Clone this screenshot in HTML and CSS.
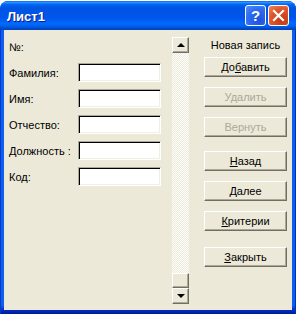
FILE: index.html
```html
<!DOCTYPE html>
<html lang="ru">
<head>
<meta name="viewport" content="width=device-width, initial-scale=1">
<link rel="stylesheet" href="styles.css">
</head>
<body>
	<div id="window">
		<div id="titlebar">
			<span id="title">Лист1</span>
			<div id="controls">
				<button class="tbBtn help">?</button>
				<button class="tbBtn close">
					<svg width="13" height="13" viewBox="0 0 13 13"><path d="M2 2 L11 11 M11 2 L2 11" stroke="#fff" stroke-width="2.2" stroke-linecap="square"/></svg>
				</button>
			</div>
		</div>
		<div id="frame">
			<div id="client">
				<div id="fields">
					<div class="row"><label>№:</label></div>
					<div class="row"><label>Фамилия:</label><input type="text"></div>
					<div class="row"><label>Имя:</label><input type="text"></div>
					<div class="row"><label>Отчество:</label><input type="text"></div>
					<div class="row"><label>Должность :</label><input type="text"></div>
					<div class="row"><label>Код:</label><input type="text"></div>
				</div>

				<div id="scrollbar">
					<div class="sbBtn"><span class="arrowUp"></span></div>
					<div class="track"></div>
					<div class="sbBtn thumb"></div>
					<div class="sbBtn"><span class="arrowDown"></span></div>
				</div>

				<div id="actions">
					<div class="caption">Новая запись</div>
					<button class="btn">До<u>б</u>авить</button>
					<button class="btn" disabled>Удалить</button>
					<button class="btn" disabled>Вернуть</button>
					<button class="btn nav"><u>Н</u>азад</button>
					<button class="btn"><u>Д</u>алее</button>
					<button class="btn"><u>К</u>ритерии</button>
					<button class="btn closeBtn"><u>З</u>акрыть</button>
				</div>
			</div>
		</div>
	</div>
</body>
</html>
```

FILE: styles.css
```css
:root {
	--face:#ECE9D8;
	--shadow:#716F64;
	--light-shadow:#ACA899;
	--xp-blue:#0054E3;
}

* {
	box-sizing:border-box;
	font-family:"Liberation Sans", Arial, sans-serif;
}

html, body {
	margin:0;
	background-color:#fff;
}

#window{
	width:296px;
	height:313px;
	margin-top:1px;
	display:flex;
	flex-direction:column;
	border-radius:8px 8px 0 0;
	overflow:hidden;
	background-color:var(--xp-blue);
}

#titlebar{
	height:29px;
	display:flex;
	align-items:center;
	padding:0 7px 0 7px;
	background:linear-gradient(to bottom, #0058ee 0%, #3593ff 4%, #288eff 6%, #127dff 8%, #036ffc 10%, #0262ee 14%, #0057e5 20%, #0054e3 24%, #0055eb 56%, #005bf5 66%, #026afe 76%, #0062ef 86%, #0052d6 92%, #0046c5 96%, #0042bd 100%);
}

#title{
	color:white;
	font-size:13px;
	font-weight:bold;
	text-shadow:1px 1px #0a1e8a;
	margin-top:1px;
}

#controls{
	margin-left:auto;
	display:flex;
	gap:2px;
}

.tbBtn{
	width:21px;
	height:21px;
	padding:0;
	border:1px solid #fff;
	border-radius:3px;
	display:flex;
	align-items:center;
	justify-content:center;
	color:white;
	font-size:15px;
	font-weight:bold;
}

.tbBtn.help{
	background:radial-gradient(circle at 70% 75%, #1f52dc 0%, #2f6ef4 60%, #5a8ef8 100%);
}

.tbBtn.close{
	background:radial-gradient(circle at 70% 75%, #c13a15 0%, #e2562b 60%, #ef8a64 100%);
}

#frame{
	flex:1;
	display:flex;
	padding:0 4px 4px 4px;
	background:linear-gradient(to bottom, #0a5ef0 0%, #0a5ef0 97%, #0027b8 99%, #001a90 100%);
	box-shadow:inset 1px 0 #0838c8, inset -1px 0 #0030b8;
}

#client{
	flex:1;
	display:flex;
	padding-top:7px;
	background-color:var(--face);
}

/* left side : labels + inputs */
#fields{
	width:168px;
	padding-left:5px;
}

.row{
	height:19px;
	margin-bottom:7px;
	display:flex;
	align-items:center;
}

.row label{
	width:69px;
	font-size:11px;
	color:#000;
	white-space:nowrap;
}

.row input{
	width:83px;
	height:19px;
	margin:0;
	padding:0 2px;
	background-color:#fff;
	border:1px solid;
	border-color:var(--light-shadow) #fff #fff var(--light-shadow);
	box-shadow:inset 1px 1px #000, inset -1px -1px #f1efe2;
	outline:none;
}

/* scrollbar */
#scrollbar{
	width:17px;
	height:267px;
	display:flex;
	flex-direction:column;
}

.sbBtn{
	height:16px;
	display:flex;
	align-items:center;
	justify-content:center;
	background-color:var(--face);
	border:1px solid;
	border-color:#fff var(--shadow) var(--shadow) #fff;
	box-shadow:inset -1px -1px var(--light-shadow);
}

.sbBtn.thumb{
	height:15px;
}

.track{
	flex:1;
	background:repeating-conic-gradient(#fff 0 25%, var(--face) 0 50%) 0 0 / 2px 2px;
}

.arrowUp, .arrowDown{
	width:0;
	height:0;
	border-left:4px solid transparent;
	border-right:4px solid transparent;
}
.arrowUp{
	border-bottom:4px solid #000;
	margin-top:-1px;
}
.arrowDown{
	border-top:4px solid #000;
}

/* right side : buttons */
#actions{
	width:83px;
	margin-left:15px;
	display:flex;
	flex-direction:column;
}

.caption{
	height:16px;
	line-height:16px;
	margin-bottom:4px;
	font-size:11px;
	text-align:center;
	white-space:nowrap;
}

.btn{
	height:20px;
	margin:0 0 10px 0;
	padding:0;
	font-size:11px;
	color:#000;
	background-color:var(--face);
	border:1px solid;
	border-color:#fff var(--shadow) var(--shadow) #fff;
	box-shadow:inset -1px -1px var(--light-shadow);
}

.btn:disabled{
	color:var(--light-shadow);
}

.btn.nav{
	margin-top:4px;
}

.btn.closeBtn{
	margin-top:6px;
}
```
